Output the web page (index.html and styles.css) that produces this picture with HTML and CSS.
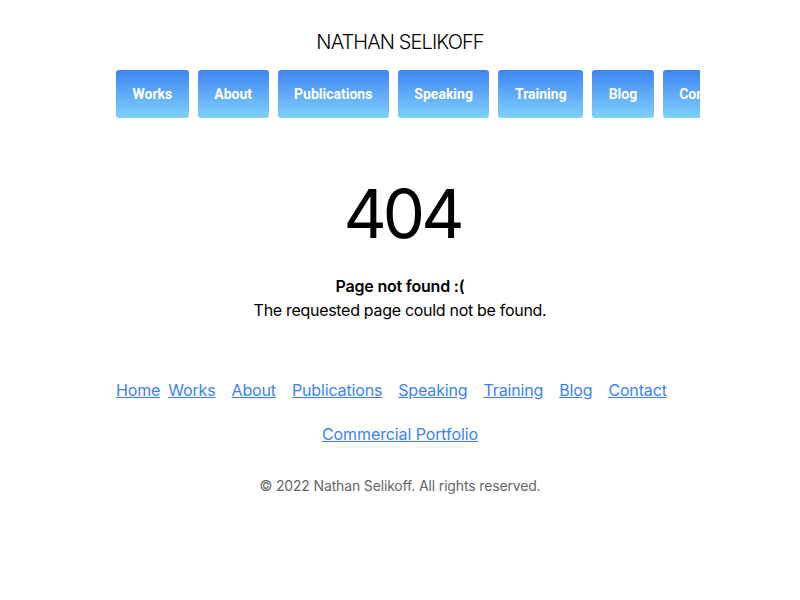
FILE: index.html
```html
<!DOCTYPE html>
<html lang="en">
<head>
<meta charset="utf-8">
<title>404 - Nathan Selikoff</title>
<link rel="stylesheet" href="styles.css">
</head>
<body>
<div class="page">
  <header class="header">
    <h1 class="site-title">NATHAN SELIKOFF</h1>
    <nav class="topnav">
      <a class="btn" href="#">Works</a>
      <a class="btn" href="#">About</a>
      <a class="btn" href="#">Publications</a>
      <a class="btn" href="#">Speaking</a>
      <a class="btn" href="#">Training</a>
      <a class="btn" href="#">Blog</a>
      <a class="btn" href="#">Contact</a>
    </nav>
  </header>
  <main class="main">
    <div class="code">404</div>
    <p class="msg-title">Page not found :(</p>
    <p class="msg">The requested page could not be found.</p>
  </main>
  <footer class="footer">
    <div class="footnav">
      <a class="home" href="#">Home</a>
      <a href="#">Works</a>
      <a href="#">About</a>
      <a href="#">Publications</a>
      <a href="#">Speaking</a>
      <a href="#">Training</a>
      <a href="#">Blog</a>
      <a href="#">Contact</a>
    </div>
    <div class="footnav2">
      <a href="#">Commercial Portfolio</a>
    </div>
    <p class="copy">© 2022 Nathan Selikoff. All rights reserved.</p>
  </footer>
</div>
</body>
</html>
```
FILE: styles.css
```css
html, body {
  margin: 0;
  padding: 0;
  background: #fff;
}
body {
  font-family: Inter, "Noto Sans", sans-serif;
  color: #000;
}
.page {
  width: 568px;
  margin: 0 auto;
  padding-top: 28px;
}
.header {
  text-align: center;
}
.site-title {
  margin: 0;
  font-size: 20px;
  line-height: 28px;
  font-weight: 300;
  letter-spacing: -0.9px;
}
.topnav {
  margin-top: 14px;
  margin-right: -16px;
  display: flex;
  gap: 9px;
  overflow: hidden;
  white-space: nowrap;
}
.btn {
  flex: none;
  display: block;
  padding: 0 16.5px;
  height: 48px;
  line-height: 48px;
  border-radius: 3px;
  background: linear-gradient(to bottom, #3e84f4, #80d1fb);
  color: #fff;
  text-decoration: none;
  font-family: Roboto, sans-serif;
  font-weight: 700;
  font-size: 14px;
}
.main {
  text-align: center;
  padding-top: 56px;
}
.code {
  font-size: 67px;
  line-height: 80px;
  font-weight: 400;
  letter-spacing: -4px;
  text-indent: 4px;
}
.msg-title {
  margin: 20px 0 0;
  font-weight: 600;
  font-size: 16px;
  line-height: 24px;
  letter-spacing: -0.2px;
}
.msg {
  margin: 0;
  font-size: 16px;
  line-height: 24px;
  letter-spacing: -0.3px;
}
.footer {
  padding-top: 56px;
}
.footnav {
  display: flex;
  font-size: 16px;
  line-height: 24px;
  letter-spacing: -0.15px;
}
.footnav a, .footnav2 a {
  color: #3b82f6;
  text-decoration: underline;
}
.footnav a {
  margin: 0 8px;
}
.footnav a.home {
  margin: 0;
}
.footnav2 {
  margin-top: 20px;
  text-align: center;
  font-size: 16px;
  line-height: 24px;
  letter-spacing: -0.1px;
}
.copy {
  margin: 30px 0 0;
  text-align: center;
  font-size: 14px;
  line-height: 20px;
  color: #666;
  letter-spacing: -0.15px;
}
```
